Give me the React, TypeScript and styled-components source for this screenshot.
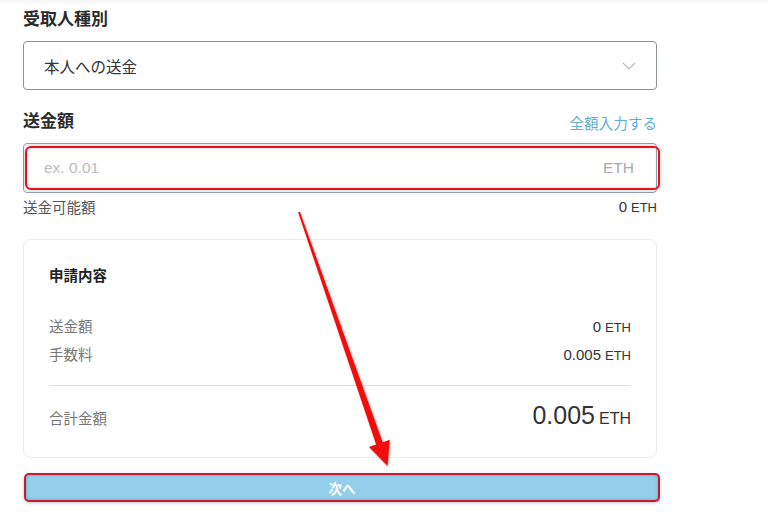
import styled, { createGlobalStyle } from 'styled-components';

const GlobalStyle = createGlobalStyle`
	html, body {
		margin: 0;
		padding: 0;
		background: #fff;
	}
	body {
		font-family: 'Liberation Sans', 'Noto Sans CJK JP', Arial, sans-serif;
		color: #333;
	}
`;

const Page = styled.main`
	position: relative;
	width: 768px;
	height: 522px;
	overflow: hidden;
	background: linear-gradient(#f6f6f6 0, #fff 6px);
`;

const Form = styled.div`
	width: 634px;
	padding: 8px 0 0 23px;
	display: flex;
	flex-direction: column;
`;

const SectionTitle = styled.h2`
	margin: 0;
	font-size: 17px;
	font-weight: 700;
	line-height: 24px;
	color: #2b2b2b;
`;

const Select = styled.div`
	margin-top: 9px;
	height: 47px;
	border: 1px solid #8d9499;
	border-radius: 4px;
	display: flex;
	align-items: center;
	justify-content: space-between;
	padding: 0 20px;
	font-size: 15.5px;
	color: #333;
`;

const LabelRow = styled.div`
	margin-top: 20px;
	display: flex;
	align-items: center;
	justify-content: space-between;
`;

const FillLink = styled.a`
	font-size: 14.6px;
	color: #62aed2;
	text-decoration: none;
`;

const AmountField = styled.div`
	position: relative;
	margin-top: 9px;
	height: 48px;
	border: 1px solid #9aa0b4;
	border-radius: 4px;
	display: flex;
	align-items: center;
	justify-content: space-between;
	padding: 0 20px;
	font-size: 15.5px;
	color: #bbb;

	&::after {
		content: '';
		position: absolute;
		left: 1px;
		top: 2px;
		right: -4px;
		bottom: 2px;
		border: 2px solid #e0141b;
		border-radius: 6px;
		box-shadow: 0 0 4px rgba(0, 0, 0, 0.25), inset 0 0 4px rgba(0, 0, 0, 0.15);
		pointer-events: none;
	}
`;

const Unit = styled.span`
	color: #a9a9a9;
	margin-right: 2px;
`;

const AvailableRow = styled.div`
	margin-top: 4px;
	display: flex;
	justify-content: space-between;
	align-items: center;
	line-height: 20px;
	font-size: 14.5px;
	color: #555;
`;

const Amount = styled.span<{ $size?: number }>`
	font-size: ${({ $size }) => $size ?? 15}px;
	color: #333;

	& small {
		font-size: ${({ $size }) => ($size && $size > 20 ? 16 : 13)}px;
		margin-left: 4px;
	}
`;

const Card = styled.section`
	margin-top: 21px;
	border: 1px solid #ececec;
	border-radius: 8px;
	padding: 24px 25px 22px 25px;
	display: flex;
	flex-direction: column;
`;

const CardTitle = styled.h3`
	margin: 0;
	font-size: 14.5px;
	font-weight: 700;
	line-height: 24px;
	color: #222;
`;

const Rows = styled.div`
	margin-top: 25px;
	display: flex;
	flex-direction: column;
`;

const Row = styled.div<{ $tall?: boolean }>`
	display: flex;
	justify-content: space-between;
	align-items: ${({ $tall }) => ($tall ? 'baseline' : 'center')};
	line-height: ${({ $tall }) => ($tall ? 32 : 27)}px;
	font-size: 14.5px;
	color: #777;
`;

const Divider = styled.hr`
	margin: 16px 0 13px;
	border: none;
	border-top: 1px solid #dcdcdc;
`;

const NextButton = styled.button`
	margin-top: 15px;
	height: 29px;
	width: 636px;
	margin-left: 1px;
	border: 2px solid #c21f2e;
	border-radius: 5px;
	background: #93cfea;
	box-shadow: 0 1px 3px rgba(0, 0, 0, 0.25), inset 0 0 3px rgba(0, 60, 110, 0.35);
	color: #fff;
	font-family: inherit;
	font-size: 13.5px;
	font-weight: 700;
`;

const ArrowLayer = styled.svg`
	position: absolute;
	left: 0;
	top: 0;
	pointer-events: none;
`;

const Chevron = () => (
	<svg width='14' height='8' viewBox='0 0 14 8'>
		<path d='M1 1 L7 7 L13 1' fill='none' stroke='#b8bcc0' strokeWidth='1.2' />
	</svg>
);

const App = () => {
	return (
		<Page>
			<GlobalStyle />
			<Form>
				<SectionTitle>受取人種別</SectionTitle>
				<Select>
					<span>本人への送金</span>
					<Chevron />
				</Select>

				<LabelRow>
					<SectionTitle>送金額</SectionTitle>
					<FillLink>全額入力する</FillLink>
				</LabelRow>
				<AmountField>
					<span>ex. 0.01</span>
					<Unit>ETH</Unit>
				</AmountField>
				<AvailableRow>
					<span>送金可能額</span>
					<Amount>
						0<small>ETH</small>
					</Amount>
				</AvailableRow>

				<Card>
					<CardTitle>申請内容</CardTitle>
					<Rows>
						<Row>
							<span>送金額</span>
							<Amount>
								0<small>ETH</small>
							</Amount>
						</Row>
						<Row>
							<span>手数料</span>
							<Amount>
								0.005<small>ETH</small>
							</Amount>
						</Row>
					</Rows>
					<Divider />
					<Row $tall>
						<span>合計金額</span>
						<Amount $size={25}>
							0.005<small>ETH</small>
						</Amount>
					</Row>
				</Card>

				<NextButton>次へ</NextButton>
			</Form>

			<ArrowLayer width='768' height='522'>
				<defs>
					<filter id='shadow' x='-20%' y='-20%' width='140%' height='140%'>
						<feDropShadow dx='1' dy='1' stdDeviation='1.2' floodColor='#000' floodOpacity='0.3' />
					</filter>
				</defs>
				<polygon
					points='298.1,212.3 299.9,211.7 382.7,442.2 389.8,439.7 387.5,466 369,446.9 376.1,444.5'
					fill='#f20d0d'
					filter='url(#shadow)'
				/>
			</ArrowLayer>
		</Page>
	);
};

export default App;
